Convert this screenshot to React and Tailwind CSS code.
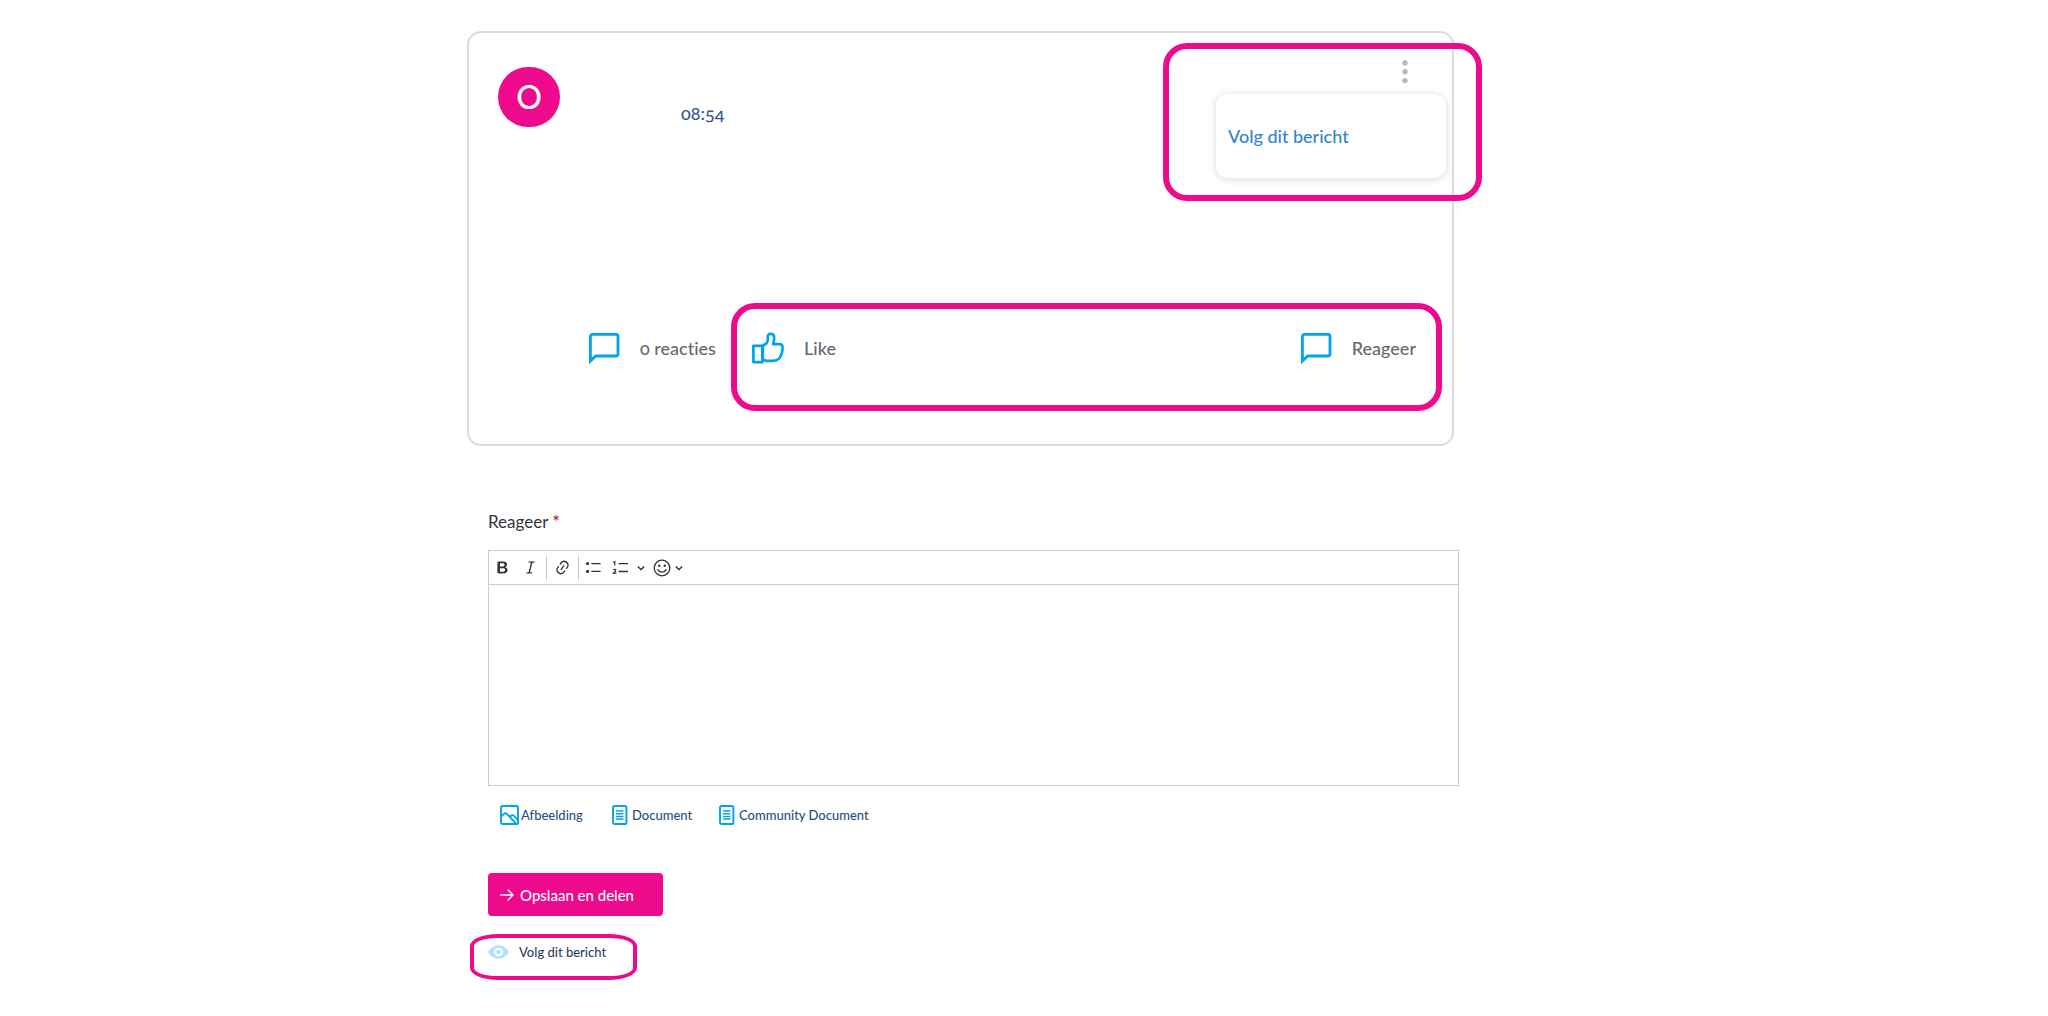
import React, { useState } from 'react';

const CommentIcon = () => (
  <svg className="w-8 h-8 shrink-0 text-[#00a4e8]" fill="none" stroke="currentColor" viewBox="0 0 32 32">
    <path strokeWidth={2.8} d="M2.4 27.6V4.4A2 2 0 0 1 4.4 2.4H28A2 2 0 0 1 30 4.4V22A2 2 0 0 1 28 24H7.8L2.4 29Z" />
  </svg>
);

const LikeIcon = () => (
  <svg className="w-8 h-8 shrink-0 text-[#00a4e8]" fill="none" stroke="currentColor" viewBox="0 0 32 32">
    <path strokeWidth={2.7} strokeLinejoin="round" d="M1.4 13.8H10.4V30.2H1.4Z" />
    <path strokeWidth={2.7} strokeLinejoin="round" d="M10.8 13.6C13.6 12.4 15.6 10.6 15.8 7.8V4.8C15.8 2.8 17 1.8 18.6 1.8C21 1.8 22.2 3.4 22.2 5.8C22.2 8.4 21.8 10 21 12.2H27.4C29.6 12.2 30.6 13.4 30.6 15.6C30.4 20.6 29.2 24 27 26.6C25.4 28.2 23.6 28.8 21.2 28.8H14.4C12.6 28.8 11.6 28 10.8 26.8Z" />
  </svg>
);

const DocumentIcon = () => (
  <svg className="w-4 h-5 shrink-0 text-[#00a4e8]" fill="none" stroke="currentColor" viewBox="0 0 16 20">
    <rect x="1" y="1" width="13.4" height="18" rx="1.6" strokeWidth={1.9} />
    <path strokeWidth={1.5} d="M4 6h7.4M4 8.7h7.4M4 11.4h7.4M4 14.1h7.4" />
  </svg>
);

const ImageIcon = () => (
  <svg className="w-5 h-5 shrink-0 text-[#00a4e8]" fill="none" stroke="currentColor" viewBox="0 0 20 20">
    <rect x="1" y="1" width="17" height="18" rx="1.6" strokeWidth={1.9} />
    <path strokeWidth={1.8} strokeLinejoin="round" d="M1.4 11.4L4 8.8Q5.4 7.6 6.8 8.8L15.6 18.2M9.8 11.6L12 10.4Q13.2 9.8 14.2 11L17.8 15.2" />
  </svg>
);

const ChevronIcon = () => (
  <svg className="w-2 h-2" fill="none" stroke="currentColor" viewBox="0 0 8 8">
    <path strokeWidth={1.4} d="M0.8 2.4L4 5.6L7.2 2.4" />
  </svg>
);

const App = () => {
  const [message, setMessage] = useState('');

  return (
    <div className="min-h-screen bg-white pt-[31px] pb-9 font-['Lato','Open_Sans',sans-serif] [font-variant-ligatures:none]">
      <main className="mx-auto w-full max-w-[1114px] pr-[122px]">
        {/* Post */}
        <article className="relative mr-[5px] rounded-[14px] border-2 border-[#dcdcdc] pt-[34px] pb-[33px]">
          <header className="flex pl-[29px]">
            <div className="flex h-[60px] w-[62px] items-center justify-center rounded-full bg-[#ee0a8c] text-[32px] leading-none font-medium text-white">
              O
            </div>
            <time className="mt-[34px] ml-[121px] text-lg leading-6 font-medium oldstyle-nums text-[#35588c]">08:54</time>
          </header>
          <div className="h-44"></div>

          {/* Post actions */}
          <div className="flex items-start pr-[10px] pl-[119px] text-lg leading-7 font-medium text-[#6b6670]">
            <button className="mt-[29px] flex w-[143px] items-center gap-5 whitespace-nowrap oldstyle-nums">
              <CommentIcon />
              0 reacties
            </button>
            <div className="flex h-[108px] flex-1 items-start justify-between rounded-[24px] border-6 border-[#ee0a8c] pt-[23px] pr-5 pl-[15px]">
              <button className="flex items-center gap-5">
                <LikeIcon />
                Like
              </button>
              <button className="flex items-center gap-5">
                <CommentIcon />
                Reageer
              </button>
            </div>
          </div>

          {/* Options menu */}
          <div className="absolute top-[10px] -right-[30px] h-[158px] w-[319px] rounded-[24px] border-6 border-[#ee0a8c]">
            <button aria-label="Opties" className="absolute top-[11px] right-[61px] flex h-6 w-5 items-center justify-center text-[#b8b8b8]">
              <svg className="w-[6px] h-6" fill="currentColor" viewBox="0 0 6 24">
                <circle cx="3" cy="3" r="2.7" />
                <circle cx="3" cy="11.8" r="2.7" />
                <circle cx="3" cy="20.6" r="2.7" />
              </svg>
            </button>
            <div className="absolute top-[45px] right-[30px] flex h-[84px] w-[230px] items-center rounded-xl bg-white pl-3 shadow-[0_1px_8px_rgba(0,0,0,0.16)]">
              <a href="#volg" className="text-lg leading-6 font-medium text-[#2f86c9]">Volg dit bericht</a>
            </div>
          </div>
        </article>

        {/* Reply form */}
        <form className="pt-16 pl-[21px]" onSubmit={(e) => e.preventDefault()}>
          <label htmlFor="reply" className="block text-[17px] leading-6 text-[#33333b]">
            Reageer <span className="font-bold text-[#b0373c]">*</span>
          </label>
          <div className="mt-4 border border-[#cccccc]">
            <div className="flex h-[34px] items-center border-b border-[#cccccc] pl-[5px] text-[#333333]">
              <button type="button" aria-label="Vet" className="flex w-[17px] justify-center">
                <svg className="w-[17px] h-[17px]" fill="currentColor" viewBox="0 0 20 20">
                  <path d="M10.187 17H5.773c-.637 0-1.092-.138-1.364-.415-.273-.277-.409-.718-.409-1.323V4.738c0-.617.14-1.062.419-1.332.279-.27.73-.406 1.354-.406h4.68c.69 0 1.288.041 1.793.124.506.083.96.242 1.36.478.341.197.644.447.906.75a3.262 3.262 0 0 1 .808 2.162c0 1.401-.722 2.426-2.167 3.075C15.05 10.175 16 11.315 16 13.01a3.756 3.756 0 0 1-2.296 3.504 6.1 6.1 0 0 1-1.517.377c-.571.073-1.238.11-2 .11zm-.217-6.217H7v4.087h3.069c1.977 0 2.965-.69 2.965-2.072 0-.707-.256-1.22-.768-1.537-.512-.319-1.277-.478-2.296-.478zM7 5.13v3.619h2.606c.729 0 1.292-.067 1.69-.2a1.6 1.6 0 0 0 .91-.765c.165-.267.247-.566.247-.897 0-.707-.26-1.176-.778-1.409-.519-.232-1.31-.348-2.375-.348H7z" />
                </svg>
              </button>
              <button type="button" aria-label="Cursief" className="ml-[11px] flex w-[17px] justify-center">
                <svg className="w-[17px] h-[17px]" fill="currentColor" viewBox="0 0 20 20">
                  <path d="m9.586 14.633.021.004c-.036.335.095.655.393.962.082.083.173.15.274.201h1.474a.6.6 0 1 1 0 1.2H5.304a.6.6 0 0 1 0-1.2h1.15c.474-.07.809-.182 1.005-.334.157-.122.291-.32.404-.597l2.416-9.55a1.053 1.053 0 0 0-.281-.823 1.12 1.12 0 0 0-.442-.296H8.15a.6.6 0 0 1 0-1.2h6.443a.6.6 0 1 1 0 1.2h-1.195c-.376.056-.65.155-.823.296-.215.175-.423.439-.623.79l-2.366 9.347z" />
                </svg>
              </button>
              <span className="ml-[7px] h-[26px] border-l border-[#cccccc]"></span>
              <button type="button" aria-label="Link" className="ml-[7px] flex w-[17px] justify-center">
                <svg className="w-[17px] h-[17px]" fill="currentColor" viewBox="0 0 20 20">
                  <path d="m11.077 15 .991-1.416a.75.75 0 1 1 1.229.86l-1.148 1.64a.748.748 0 0 1-.217.206 5.251 5.251 0 0 1-8.503-5.955.741.741 0 0 1 .12-.274l1.147-1.639a.75.75 0 1 1 1.228.86L4.933 10.7l.006.003a3.75 3.75 0 0 0 6.132 4.294l.006.004zm5.494-5.335a.748.748 0 0 1-.12.274l-1.147 1.639a.75.75 0 1 1-1.228-.86l.86-1.23a3.75 3.75 0 0 0-6.144-4.301l-.86 1.229a.75.75 0 0 1-1.229-.86l1.148-1.64a.748.748 0 0 1 .217-.206 5.251 5.251 0 0 1 8.503 5.955zm-4.563-2.532a.75.75 0 0 1 .184 1.045l-3.155 4.505a.75.75 0 1 1-1.229-.86l3.155-4.506a.75.75 0 0 1 1.045-.184z" />
                </svg>
              </button>
              <span className="ml-[7px] h-[26px] border-l border-[#cccccc]"></span>
              <button type="button" aria-label="Opsomming" className="ml-[6px] flex w-[17px] justify-center">
                <svg className="w-[17px] h-[17px]" fill="currentColor" viewBox="0 0 17 17">
                  <circle cx="2.6" cy="4.6" r="1.6" />
                  <circle cx="2.6" cy="12.4" r="1.6" />
                  <path d="M6.4 4h9.2v1.3H6.4zM6.4 11.8h9.2v1.3H6.4z" />
                </svg>
              </button>
              <button type="button" aria-label="Genummerde lijst" className="ml-[10px] flex w-[17px] justify-center">
                <svg className="w-[17px] h-[17px]" fill="none" stroke="currentColor" viewBox="0 0 17 17">
                  <path strokeWidth={1.3} d="M6.6 4.7h9.4M6.6 12.5h9.4" />
                  <path strokeWidth={1.2} d="M1.2 3.2L2.8 2.6V6.6M1.2 10.8Q2.6 9.8 3.8 10.8Q4 12 1.4 14.2H4.4" />
                </svg>
              </button>
              <button type="button" aria-label="Lijststijl" className="ml-[8px]">
                <ChevronIcon />
              </button>
              <button type="button" aria-label="Emoji" className="ml-[8px] flex items-center gap-[4px]">
                <svg className="w-[18px] h-[18px]" fill="none" stroke="currentColor" viewBox="0 0 18 18">
                  <circle cx="9" cy="9" r="7.8" strokeWidth={1.3} />
                  <path strokeWidth={1.3} strokeLinecap="round" d="M4.8 10.8Q9 15.6 13.2 10.8" />
                  <circle cx="6.2" cy="6.8" r="1.2" fill="currentColor" stroke="none" />
                  <circle cx="11.8" cy="6.8" r="1.2" fill="currentColor" stroke="none" />
                </svg>
                <ChevronIcon />
              </button>
            </div>
            <textarea
              id="reply"
              value={message}
              onChange={(e) => setMessage(e.target.value)}
              className="block h-[200px] w-full resize-none p-3 text-base outline-none"
            />
          </div>

          {/* Attachments */}
          <div className="mt-[19px] flex items-center pl-3 text-[13px] leading-5 font-medium text-[#2d4f80]">
            <button type="button" className="flex w-28 items-center gap-px">
              <ImageIcon />
              Afbeelding
            </button>
            <button type="button" className="flex w-[107px] items-center gap-1">
              <DocumentIcon />
              Document
            </button>
            <button type="button" className="flex items-center gap-1">
              <DocumentIcon />
              Community Document
            </button>
          </div>

          <button type="submit" className="mt-12 flex h-[43px] w-[175px] items-center gap-[6px] rounded bg-[#ee0a8c] pl-3 text-[15px] leading-6 font-medium text-white">
            <svg className="w-[14px] h-[14px]" fill="none" stroke="currentColor" viewBox="0 0 14 14">
              <path strokeWidth={1.4} d="M0 7h13M7.6 1.4L13 7L7.6 12.6" />
            </svg>
            Opslaan en delen
          </button>

          <div className="mt-[18px] -ml-[18px] flex h-[46px] w-[167px] border-4 border-[#ee0a8c] rounded-[28px/12px] pt-1 pl-[14px]">
            <a href="#volg" className="flex h-5 items-center gap-[10px] text-[13px] leading-5 font-medium text-[#2d3f66]">
              <svg className="w-[21px] h-4 text-[#b3e5fa]" viewBox="0 0 21 16">
                <path fill="currentColor" d="M0 8C2.4 3.6 6 1.2 10.5 1.2S18.6 3.6 21 8C18.6 12.4 15 14.8 10.5 14.8S2.4 12.4 0 8Z" />
                <circle cx="10.5" cy="8" r="3.3" fill="none" stroke="white" strokeWidth={2} />
              </svg>
              Volg dit bericht
            </a>
          </div>
        </form>
      </main>
    </div>
  );
};

export default App;
